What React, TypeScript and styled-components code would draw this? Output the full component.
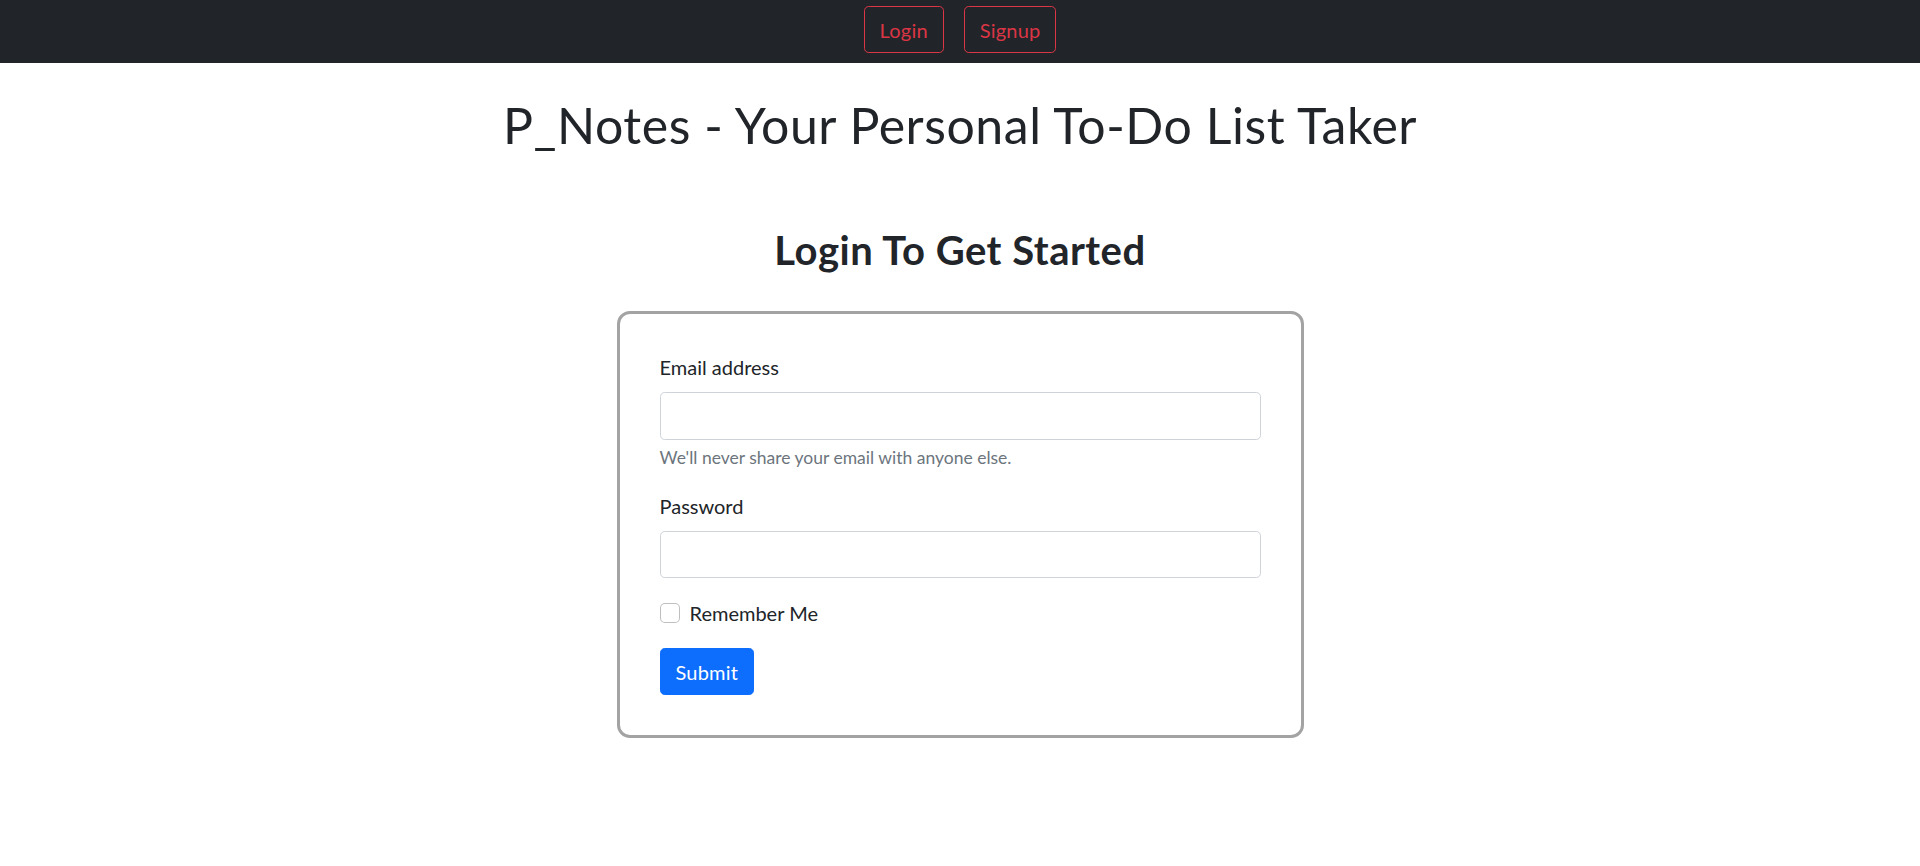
import React from "react";
import styled, { createGlobalStyle } from "styled-components";

const GlobalStyle = createGlobalStyle`
  *, *::before, *::after { box-sizing: border-box; }
  html, body { margin: 0; padding: 0; background: #fff; }
  body {
    font-family: Lato, "Open Sans", "Liberation Sans", sans-serif;
    font-size: 20px;
    line-height: 1.5;
    color: #212529;
  }
`;

const NavBar = styled.nav`
  background: #212529;
  height: 63px;
  padding-top: 6px;
  display: flex;
  justify-content: center;
  align-items: flex-start;
  gap: 20px;
`;

const OutlineButton = styled.button`
  font-family: inherit;
  font-size: 20px;
  line-height: 30px;
  padding: 7.5px 15px;
  border: 1.25px solid #dc3545;
  border-radius: 4.7px;
  background: transparent;
  color: #dc3545;
  letter-spacing: 0.2px;
  cursor: pointer;
`;

const Main = styled.main`
  display: flex;
  flex-direction: column;
  align-items: center;
`;

const Title = styled.h1`
  margin: 32px 0 0;
  font-size: 50px;
  line-height: 60px;
  font-weight: 400;
  letter-spacing: 0.55px;
  text-align: center;
`;

const Subtitle = styled.h2`
  margin: 71px 0 0;
  font-size: 40px;
  line-height: 48px;
  font-weight: 700;
  letter-spacing: 0.5px;
  text-align: center;
`;

const Card = styled.form`
  margin-top: 37px;
  width: 687px;
  border: 3px solid #a3a3a3;
  border-radius: 13px;
  padding: 38px 40px 40px;
  display: flex;
  flex-direction: column;
`;

const Field = styled.div`
  display: flex;
  flex-direction: column;
  margin-bottom: 20px;
`;

const Label = styled.label`
  font-size: 20px;
  line-height: 30px;
  margin-bottom: 10px;
`;

const Input = styled.input`
  height: 47.5px;
  padding: 7.5px 15px;
  font-family: inherit;
  font-size: 20px;
  color: #212529;
  border: 1.25px solid #ced4da;
  border-radius: 4.7px;
  background: #fff;
  outline: none;
`;

const HelpText = styled.div`
  margin-top: 5px;
  font-size: 17.5px;
  line-height: 26.25px;
  color: #6c757d;
`;

const CheckRow = styled.div`
  display: flex;
  align-items: flex-start;
  gap: 10px;
  min-height: 30px;
  margin-bottom: 20px;
`;

const CheckBox = styled.span`
  width: 20px;
  height: 20px;
  margin-top: 5px;
  border: 1.25px solid rgba(0, 0, 0, 0.25);
  border-radius: 5px;
  background: #fff;
  flex-shrink: 0;
`;

const CheckLabel = styled.label`
  font-size: 20px;
  line-height: 30px;
`;

const SubmitButton = styled.button`
  align-self: flex-start;
  font-family: inherit;
  font-size: 20px;
  line-height: 30px;
  padding: 7.5px 15px;
  border: 1.25px solid #0d6efd;
  border-radius: 4.7px;
  background: #0d6efd;
  color: #fff;
  letter-spacing: 0.2px;
  cursor: pointer;
`;

export default function App() {
  return (
    <>
      <GlobalStyle />
      <NavBar>
        <OutlineButton type="button">Login</OutlineButton>
        <OutlineButton type="button">Signup</OutlineButton>
      </NavBar>
      <Main>
        <Title>P_Notes - Your Personal To-Do List Taker</Title>
        <Subtitle>Login To Get Started</Subtitle>
        <Card onSubmit={(e) => e.preventDefault()}>
          <Field>
            <Label htmlFor="email">Email address</Label>
            <Input id="email" type="email" />
            <HelpText>We'll never share your email with anyone else.</HelpText>
          </Field>
          <Field>
            <Label htmlFor="password">Password</Label>
            <Input id="password" type="password" />
          </Field>
          <CheckRow>
            <CheckBox />
            <CheckLabel>Remember Me</CheckLabel>
          </CheckRow>
          <SubmitButton type="submit">Submit</SubmitButton>
        </Card>
      </Main>
    </>
  );
}
